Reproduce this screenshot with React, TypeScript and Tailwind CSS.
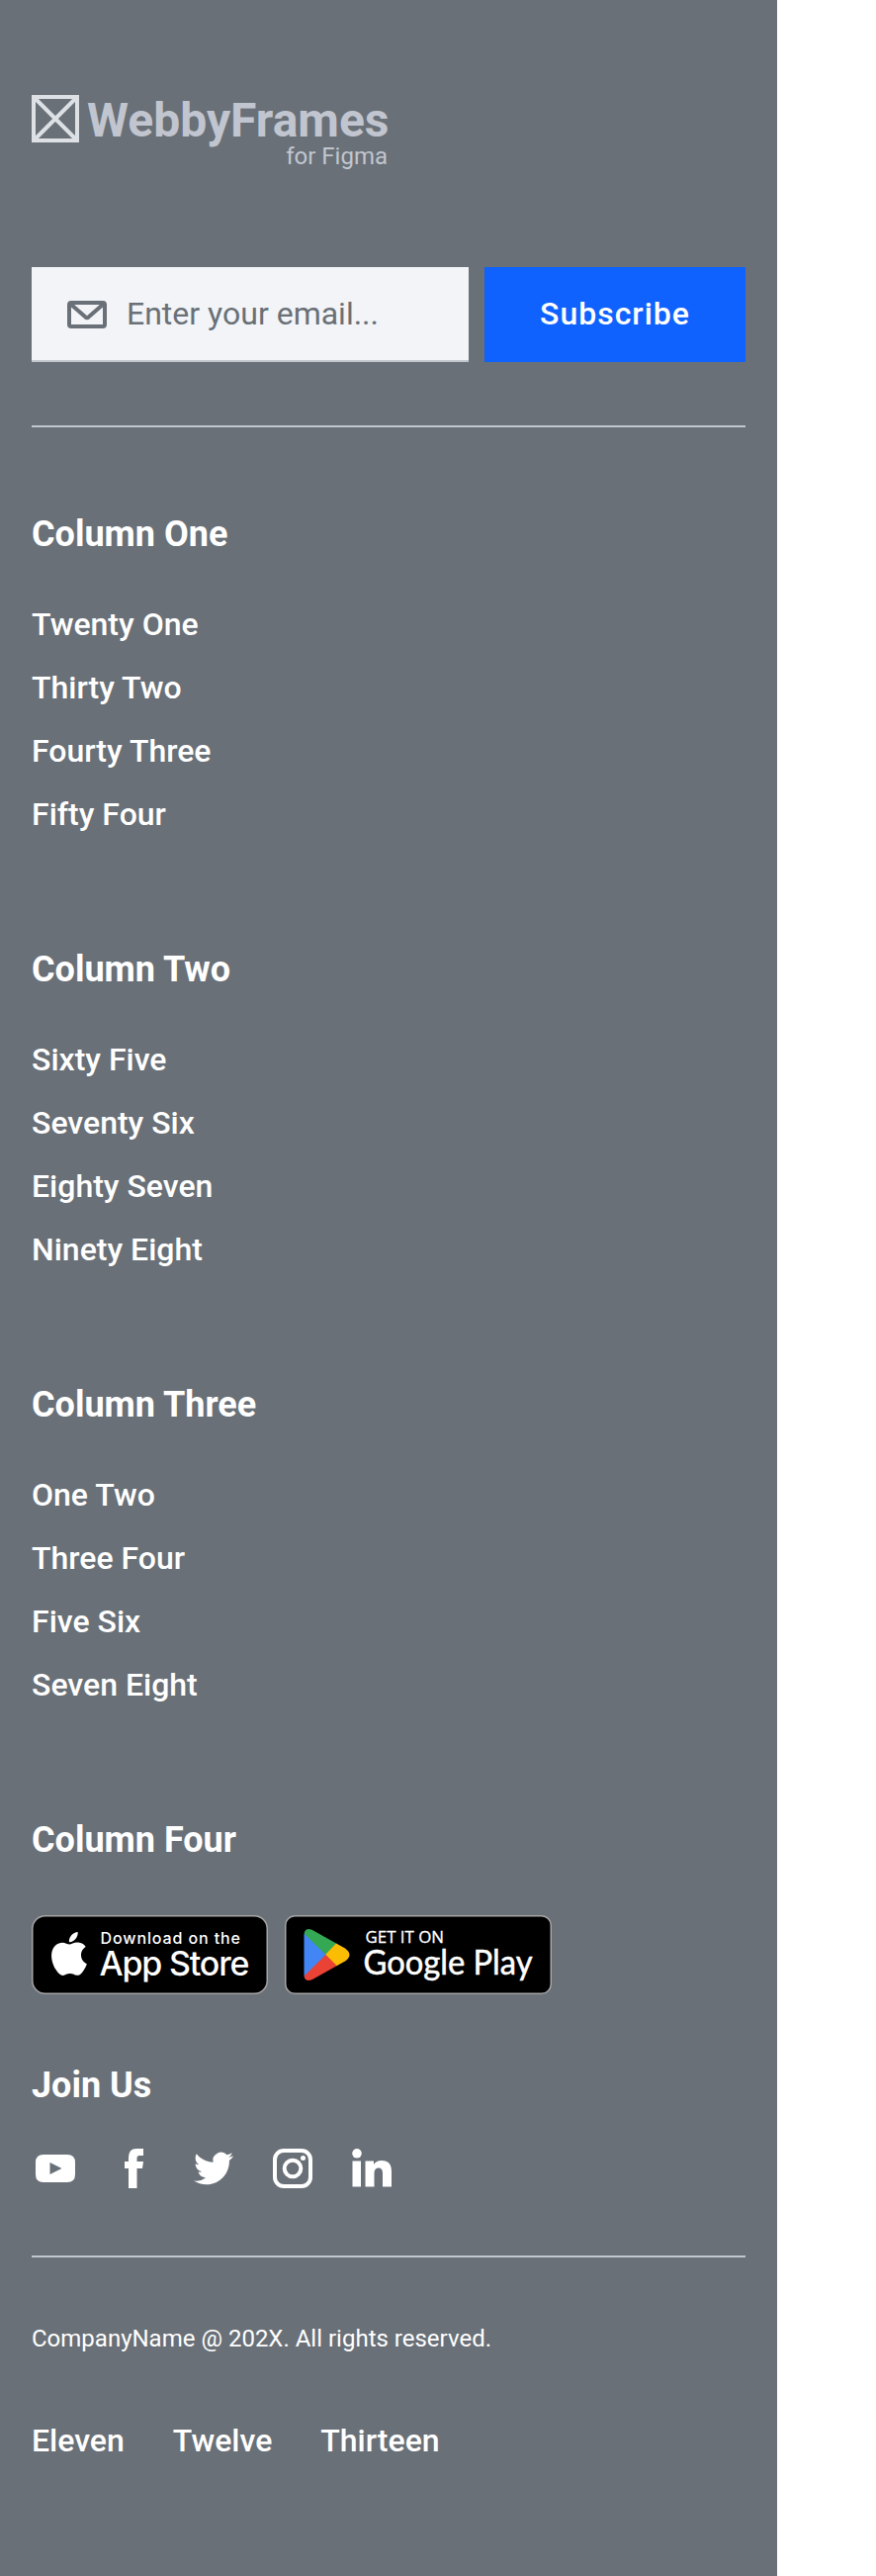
import React from "react";

const columns = [
  { title: "Column One", links: ["Twenty One", "Thirty Two", "Fourty Three", "Fifty Four"] },
  { title: "Column Two", links: ["Sixty Five", "Seventy Six", "Eighty Seven", "Ninety Eight"] },
  { title: "Column Three", links: ["One Two", "Three Four", "Five Six", "Seven Eight"] },
];

function Logo() {
  return (
    <div className="flex w-[362px] flex-col">
      <div className="flex h-12 items-center gap-2">
        <svg className="h-12 w-12 shrink-0" viewBox="0 0 48 48" fill="none" stroke="#dde1e6" strokeWidth="4">
          <rect x="2" y="2" width="44" height="44" />
          <path d="M4 4 44 44M44 4 4 44" />
        </svg>
        <span className="whitespace-nowrap pt-1 text-[48px] font-bold leading-[48px] text-[#c1c5cf]">WebbyFrames</span>
      </div>
      <span className="-mt-0.5 pr-0.5 text-right text-[24px] leading-[32px] text-[#c1c5cf]">for Figma</span>
    </div>
  );
}

function MailIcon() {
  return (
    <svg className="h-12 w-12 shrink-0" viewBox="0 0 48 48" fill="none" stroke="#697077" strokeWidth="4" strokeLinejoin="round">
      <rect x="6" y="13" width="36" height="24" rx="2" />
      <path d="M7 14 22.500 27.600q1.500 1.200 3 0L41 14" />
    </svg>
  );
}

function AppStoreBadge() {
  return (
    <svg className="h-20 w-[239px]" viewBox="0 0 239 80">
      <rect x="0.75" y="0.75" width="237.5" height="78.5" rx="13" fill="#000" stroke="#a6a6a6" strokeWidth="1.5" />
      <path
        transform="translate(16 17) scale(1.83)"
        fill="#fff"
        d="M12.152 6.896c-.948 0-2.415-1.078-3.96-1.04-2.04.027-3.91 1.183-4.961 3.014-2.117 3.675-.546 9.103 1.519 12.09 1.013 1.454 2.208 3.09 3.792 3.039 1.52-.065 2.09-.987 3.935-.987 1.831 0 2.35.987 3.96.948 1.637-.026 2.676-1.48 3.676-2.948 1.156-1.688 1.636-3.325 1.662-3.415-.039-.013-3.182-1.221-3.22-4.857-.026-3.04 2.48-4.494 2.597-4.559-1.429-2.09-3.623-2.324-4.39-2.376-2-.156-3.675 1.09-4.61 1.09zM15.53 3.83c.843-1.012 1.4-2.427 1.245-3.83-1.207.052-2.662.805-3.532 1.818-.78.896-1.454 2.338-1.273 3.714 1.338.104 2.715-.688 3.559-1.701"
      />
      <text x="69.5" y="29.3" fill="#fff" fontFamily="Inter, sans-serif" fontWeight="500" fontSize="16" textLength="141.5" lengthAdjust="spacing">Download on the</text>
      <text x="68.500" y="61" fill="#fff" fontFamily="Inter, sans-serif" fontWeight="500" fontSize="34" textLength="152" lengthAdjust="spacing">App Store</text>
    </svg>
  );
}

function GooglePlayBadge() {
  return (
    <svg className="h-20 w-[270px]" viewBox="0 0 270 80">
      <defs>
        <clipPath id="play-shape">
          <path d="M19.500 20Q20 11.500 28 15L61 33.500Q70 40 61 46.500L28 65Q20 68.500 19.500 60Z" />
        </clipPath>
      </defs>
      <rect x="0.75" y="0.75" width="268.5" height="78.5" rx="9.5" fill="#000" stroke="#a6a6a6" strokeWidth="1.5" />
      <g clipPath="url(#play-shape)">
        <path d="M19 15 42 40 19 66Z" fill="#4285f4" />
        <path d="M19 18V10H35L54 28 41.5 40Z" fill="#34a853" />
        <path d="M52 28.5 70 34V46L52 51.5 41 40Z" fill="#fbbc04" />
        <path d="M19 62V70H35L53 51.5 41.5 40Z" fill="#ea4335" />
      </g>
      <text x="81.500" y="27.7" fill="#fff" stroke="#fff" strokeWidth="0.3" fontFamily="'Open Sans', sans-serif" fontSize="17" textLength="79.5" lengthAdjust="spacingAndGlyphs">GET IT ON</text>
      <text x="79.500" y="60" fill="#fff" stroke="#fff" strokeWidth="0.5" fontFamily="Lato, sans-serif" fontSize="34" textLength="171" lengthAdjust="spacingAndGlyphs">Google Play</text>
    </svg>
  );
}

function SocialIcons() {
  return (
    <div className="flex gap-8">
      <svg className="h-12 w-12" viewBox="0 0 48 48" fill="#fff">
        <path fillRule="evenodd" d="M12 10H36Q44 10 44 18V30Q44 38 36 38H12Q4 38 4 30V18Q4 10 12 10ZM18.5 18V30L30.5 24Z" />
      </svg>
      <svg className="h-12 w-12" viewBox="0 0 48 48" fill="#fff">
        <path d="M18 44V24H14V17H18V13Q18 4 26 4H33V11H29Q26.5 11 26.5 13.5V17H33L32 24H26.5V44Z" />
      </svg>
      <svg className="h-12 w-12" viewBox="0 0 24 24" fill="#fff">
        <path transform="translate(2 2) scale(.8333)" d="M23.953 4.57a10 10 0 01-2.825.775 4.958 4.958 0 002.163-2.723c-.951.555-2.005.959-3.127 1.184a4.92 4.92 0 00-8.384 4.482C7.69 8.095 4.067 6.13 1.64 3.162a4.822 4.822 0 00-.666 2.475c0 1.71.87 3.213 2.188 4.096a4.904 4.904 0 01-2.228-.616v.06a4.923 4.923 0 003.946 4.827 4.996 4.996 0 01-2.212.085 4.936 4.936 0 004.604 3.417 9.867 9.867 0 01-6.102 2.105c-.39 0-.779-.023-1.17-.067a13.995 13.995 0 007.557 2.209c9.053 0 13.998-7.496 13.998-13.985 0-.21 0-.42-.015-.63A9.935 9.935 0 0024 4.59z" />
      </svg>
      <svg className="h-12 w-12" viewBox="0 0 48 48" fill="none" stroke="#fff" strokeWidth="4">
        <rect x="6" y="6" width="36" height="36" rx="9" />
        <circle cx="24" cy="24" r="8.3" />
        <circle cx="34.5" cy="13.5" r="2.5" fill="#fff" stroke="none" />
      </svg>
      <svg className="h-12 w-12" viewBox="0 0 48 48" fill="#fff">
        <circle cx="9" cy="8.8" r="4.8" />
        <path d="M4.500 16.500H13V42.500H4.500ZM17.500 16.500H26V20Q28.500 16 34 16Q44 16 44 27V42.500H35V29Q35 23.500 31 23.500Q26.500 23.500 26.500 29V42.500H17.500Z" />
      </svg>
    </div>
  );
}

export default function App() {
  return (
    <div className="min-h-[2604px] bg-white font-['Roboto',sans-serif]">
      <footer className="flex h-[2604px] w-[786px] flex-col bg-[#697077] px-8 pt-24 text-white">
        <Logo />
        <form className="mt-24 flex h-24 gap-4" onSubmit={(e) => e.preventDefault()}>
          <label className="flex w-[442px] items-center gap-4 border-b-2 border-[#c1c7cd] bg-[#f2f4f8] pl-8">
            <MailIcon />
            <span className="text-[32px] leading-[44px] text-[#697077]">Enter your email...</span>
          </label>
          <button className="flex-1 bg-[#0f62fe] pb-0.5 text-[32px] font-medium leading-8 tracking-[1px]">Subscribe</button>
        </form>
        <hr className="mt-16 border-t-2 border-[#c1c6cf]" />
        {columns.map((column, i) => (
          <section key={column.title} className={i === 0 ? "mt-[88px]" : "mt-[105px]"}>
            <h2 className="text-[36px] font-bold leading-10">{column.title}</h2>
            <ul className="mt-[39px]">
              {column.links.map((link) => (
                <li key={link} className="text-[32px] font-medium leading-[64px]">{link}</li>
              ))}
            </ul>
          </section>
        ))}
        <section className="mt-[105px]">
          <h2 className="text-[36px] font-bold leading-10">Column Four</h2>
          <div className="mt-14 flex gap-[17px]">
            <AppStoreBadge />
            <GooglePlayBadge />
          </div>
        </section>
        <section className="mt-[72px]">
          <h2 className="mb-10 text-[36px] font-bold leading-10">Join Us</h2>
          <SocialIcons />
        </section>
        <hr className="mt-16 border-t-2 border-[#c1c6cf]" />
        <p className="mt-[66px] text-[24px] leading-8">CompanyName @ 202X. All rights reserved.</p>
        <nav className="mt-[63px] flex gap-[49px] text-[32px] font-medium leading-[48px]">
          <a>Eleven</a>
          <a>Twelve</a>
          <a>Thirteen</a>
        </nav>
      </footer>
    </div>
  );
}
